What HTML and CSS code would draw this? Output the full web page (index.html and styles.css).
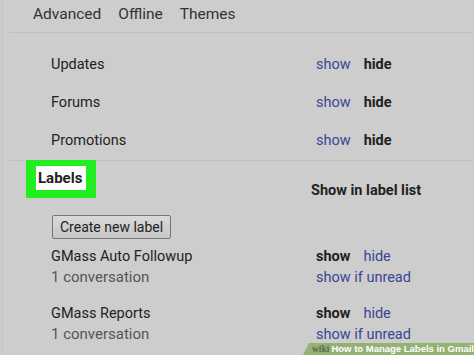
FILE: index.html
```html
<!DOCTYPE html>
<html>

<head>
    <title>Settings - Labels</title>
    <link rel="stylesheet" href="styles.css">
</head>

<body>
    <div class="mainWrapper">
        <div class="tabs">
            <span>Advanced</span>
            <span>Offline</span>
            <span>Themes</span>
        </div>
        <div class="categories">
            <div class="row">
                <div class="name">Updates</div>
                <div class="actions"><span class="link">show</span><b>hide</b></div>
            </div>
            <div class="row">
                <div class="name">Forums</div>
                <div class="actions"><span class="link">show</span><b>hide</b></div>
            </div>
            <div class="row">
                <div class="name">Promotions</div>
                <div class="actions"><span class="link">show</span><b>hide</b></div>
            </div>
        </div>
        <div class="labelsHead">
            <div class="labelsBox"><span>Labels</span></div>
            <div class="listHead">Show in label list</div>
        </div>
        <div class="createRow">
            <button type="button">Create new label</button>
        </div>
        <div class="userLabels">
            <div class="labelRow">
                <div class="name">GMass Auto Followup<div class="count">1 conversation</div></div>
                <div class="actions"><b>show</b><span class="link">hide</span><div class="link">show if unread</div></div>
            </div>
            <div class="labelRow">
                <div class="name">GMass Reports<div class="count">1 conversation</div></div>
                <div class="actions"><b>show</b><span class="link">hide</span><div class="link">show if unread</div></div>
            </div>
        </div>
    </div>
    <div class="wikiBand"><b>wiki</b>How to Manage Labels in Gmail</div>
</body>

</html>
```

FILE: styles.css
```css
body {
    margin: 0;
    background-color: #cdcdcd;
    font-family: Roboto, "Liberation Sans", sans-serif;
    font-size: 14.5px;
    color: #222;
    height: 355px;
    overflow: hidden;
    position: relative;
}

.mainWrapper {
    border-left: 1px solid #c4c4c4;
    margin-left: 2px;
    height: 355px;
}

.tabs {
    margin-left: 6px;
    padding-left: 24px;
    height: 32px;
    line-height: 28px;
    border-bottom: 1px solid #c0c0c0;
    color: #333;
    font-size: 15.5px;
    display: flex;
    gap: 17px;
}

.categories {
    padding: 13px 0 0 42px;
    border-bottom: 1px solid #c0c0c0;
    margin-left: 6px;
}

.row {
    display: grid;
    grid-template-columns: 265px auto;
    height: 38px;
    line-height: 38px;
}

.actions b,
.actions .link {
    margin-right: 13px;
}

.link {
    color: #3b4596;
}

.labelsHead {
    display: grid;
    grid-template-columns: 285px auto;
    margin-left: 23px;
    margin-top: -1px;
}

.labelsBox {
    width: 48px;
    height: 24px;
    border: 6px solid #22ee22;
    border-bottom-width: 8px;
    border-left-width: 10px;
    border-right-width: 10px;
    background-color: #fff;
    font-weight: bold;
    font-size: 15px;
    line-height: 24px;
    padding: 0 0 0 2px;
}

.listHead {
    font-weight: bold;
    padding-top: 22px;
}

.createRow {
    padding: 16px 0 0 49px;
}

button {
    font-family: Roboto, "Liberation Sans", sans-serif;
    font-size: 14px;
    color: #222;
    padding: 1px 7px 1px;
    border: 1px solid #777;
    border-radius: 2px;
    background: linear-gradient(#dadada, #c6c6c6);
    height: 24px;
    white-space: nowrap;
}

.userLabels {
    padding: 7px 0 0 48px;
}

.labelRow {
    display: grid;
    grid-template-columns: 265px auto;
    line-height: 21px;
    height: 57px;
}

.count {
    color: #555;
    font-size: 15px;
}

.wikiBand {
    position: absolute;
    right: 0;
    bottom: 0;
    width: 171px;
    height: 12px;
    background-color: #93b273;
    clip-path: polygon(6px 0, 100% 0, 100% 100%, 0 100%);
    color: #fff;
    font-family: "Liberation Sans", sans-serif;
    font-size: 9.5px;
    line-height: 12px;
    padding-left: 9px;
    box-sizing: border-box;
    white-space: nowrap;
    font-weight: bold;
}

.wikiBand b {
    color: #5d6b50;
    margin-right: 2px;
    font-family: "Liberation Serif", serif;
}
```
